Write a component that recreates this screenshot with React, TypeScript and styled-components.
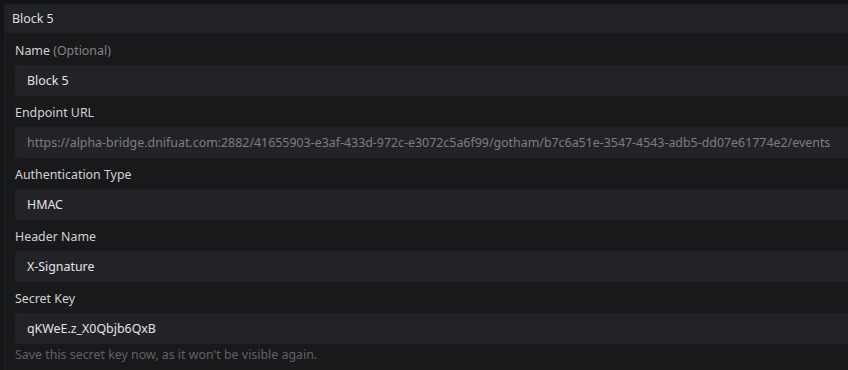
import styled, { createGlobalStyle } from "styled-components";

const GlobalStyle = createGlobalStyle`
  html, body {
    margin: 0;
    padding: 0;
    background: #141517;
    overflow: hidden;
  }
  body {
    font-family: "Noto Sans", "Open Sans", sans-serif;
    font-size: 12.4px;
    color: #d4d6da;
  }
`;

const Page = styled.div`
  padding: 4px 0 0 4px;
  width: 870px;
`;

const Panel = styled.div`
  border: 1px solid #1e1f22;
  border-right: none;
  background: #18191b;
`;

const PanelHeader = styled.div`
  height: 28px;
  line-height: 28px;
  padding: 0 7px;
  background: #212226;
  border-bottom: 1px solid #1c1d20;
  color: #dcdee2;
`;

const PanelBody = styled.div`
  padding: 7px 0 10px 10px;
  display: flex;
  flex-direction: column;
  gap: 7px;
`;

const Field = styled.div`
  display: flex;
  flex-direction: column;
  gap: 4px;
`;

const Label = styled.label`
  line-height: 20px;
  color: #d0d2d6;
`;

const Optional = styled.span`
  color: #818388;
`;

const Input = styled.div<{ $muted?: boolean }>`
  height: 31px;
  line-height: 31px;
  padding: 0 12px;
  background: #222327;
  border-radius: 4px;
  color: ${(p) => (p.$muted ? "#7c7e83" : "#e2e3e6")};
  white-space: nowrap;
  overflow: hidden;
`;

const Hint = styled.div`
  margin-top: -3px;
  line-height: 20px;
  color: #606267;
`;

const fields = [
  { label: "Endpoint URL", value: "https://alpha-bridge.dnifuat.com:2882/41655903-e3af-433d-972c-e3072c5a6f99/gotham/b7c6a51e-3547-4543-adb5-dd07e61774e2/events", muted: true },
  { label: "Authentication Type", value: "HMAC" },
  { label: "Header Name", value: "X-Signature" },
];

const App = () => {
  return (
    <>
      <GlobalStyle />
      <Page>
        <Panel>
          <PanelHeader>Block 5</PanelHeader>
          <PanelBody>
            <Field>
              <Label>
                Name <Optional>(Optional)</Optional>
              </Label>
              <Input>Block 5</Input>
            </Field>
            {fields.map((f) => (
              <Field key={f.label}>
                <Label>{f.label}</Label>
                <Input $muted={f.muted}>{f.value}</Input>
              </Field>
            ))}
            <Field>
              <Label>Secret Key</Label>
              <Input>qKWeE.z_X0Qbjb6QxB</Input>
              <Hint>Save this secret key now, as it won't be visible again.</Hint>
            </Field>
          </PanelBody>
        </Panel>
      </Page>
    </>
  );
};

export default App;
